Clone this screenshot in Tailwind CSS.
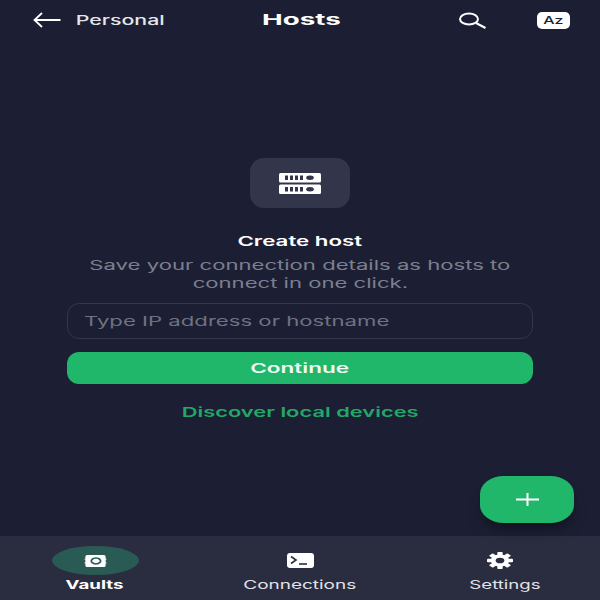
<!DOCTYPE html>
<html lang="en">
  <head>
    <meta charset="UTF-8" />
    <title>Hosts</title>
    <script src="https://cdn.jsdelivr.net/npm/@tailwindcss/browser@4"></script>
  </head>
  <body class="bg-[#1c1f33] font-['Inter',sans-serif]">
    <div class="relative flex h-[600px] w-[600px] flex-col overflow-hidden">
      <!-- header -->
      <header class="flex h-[40px] items-center text-white">
        <svg class="ml-[33px] h-[16px] w-[28px]" viewBox="0 0 28 16" fill="none" stroke="#fff" stroke-width="1.8">
          <path d="M27.5 8H2M9 1 1.500 8 9 15" />
        </svg>
        <span class="mt-[2px] ml-[15px] w-[88px] text-center text-[13px] font-medium text-[#e6e7ea]"><span class="inline-block scale-x-[1.64]">Personal</span></span>
        <span class="mt-[1px] ml-[98px] w-[78px] text-center text-[15px] font-bold"><span class="inline-block scale-x-[1.85]">Hosts</span></span>
        <svg class="ml-[118px] h-[17px] w-[29px]" viewBox="0 0 29 17" fill="none" stroke="#fff" stroke-width="2">
          <ellipse cx="11" cy="7" rx="9" ry="5.600" />
          <path d="M18 11 27.500 16" />
        </svg>
        <span class="ml-[50px] flex h-[17px] w-[33px] items-center justify-center rounded-[5px] bg-white text-[10px] font-medium text-[#1c1f33]"><span class="inline-block scale-x-[1.6]">Az</span></span>
      </header>

      <!-- empty state -->
      <main class="flex flex-1 flex-col items-center pt-[118px]">
        <div class="flex h-[50px] w-[100px] items-center justify-center rounded-[14px] bg-[#33364a]">
          <svg class="h-[21px] w-[42px]" viewBox="0 0 42 21">
            <rect width="42" height="9.500" rx="1.500" fill="#fff" />
            <rect y="11.500" width="42" height="9.500" rx="1.500" fill="#fff" />
            <g fill="#33364a">
              <rect x="6" y="2.500" width="3" height="4.500" /><rect x="11" y="2.500" width="3" height="4.500" /><rect x="16" y="2.500" width="3" height="4.500" /><rect x="21" y="2.500" width="3" height="4.500" />
              <ellipse cx="31" cy="4.750" rx="3.800" ry="2.200" />
              <rect x="6" y="14" width="3" height="4.500" /><rect x="11" y="14" width="3" height="4.500" /><rect x="16" y="14" width="3" height="4.500" /><rect x="21" y="14" width="3" height="4.500" />
              <ellipse cx="31" cy="16.250" rx="3.800" ry="2.200" />
            </g>
          </svg>
        </div>
        <h1 class="mt-[24px] text-[13.5px] leading-[18px] font-semibold text-white"><span class="inline-block scale-x-[1.65] whitespace-nowrap">Create host</span></h1>
        <p class="mt-[6px] text-center text-[13px] leading-[18px] text-[#7c7f8f]">
          <span class="inline-block scale-x-[1.7] whitespace-nowrap">Save your connection details as hosts to</span><br />
          <span class="inline-block scale-x-[1.7] whitespace-nowrap">connect in one click.</span>
        </p>
        <div class="mt-[11px] flex h-[36px] w-[466px] items-center rounded-[12px] border border-[#34374a] pl-[16px] text-[13.5px] text-[#6f7282]">
          <span class="inline-block origin-left scale-x-[1.64] whitespace-nowrap">Type IP address or hostname</span>
        </div>
        <button class="mt-[13px] flex h-[32px] w-[466px] items-center justify-center rounded-[12px] bg-[#21b76a] text-[13.5px] font-semibold text-[#eefaf3]">
          <span class="inline-block scale-x-[1.67]">Continue</span>
        </button>
        <a class="mt-[19px] text-[13.5px] leading-[18px] font-semibold text-[#22a866]"><span class="inline-block scale-x-[1.62] whitespace-nowrap">Discover local devices</span></a>
      </main>

      <!-- add button -->
      <button class="absolute top-[476px] left-[480px] flex h-[47px] w-[94px] items-center justify-center rounded-[24px/18px] bg-[#21b76a] shadow-lg shadow-black/30">
        <svg class="h-[13px] w-[23px]" viewBox="0 0 23 13" stroke="#fff" stroke-width="2"><path d="M0 6.500H23M11.500 0V13" /></svg>
      </button>

      <!-- bottom nav -->
      <nav class="grid h-[64px] grid-cols-[200px_200px_200px] bg-[#2a2d40] text-[12px] text-[#e2e3e8]">
        <div class="flex flex-col items-center">
          <span class="mt-[10px] ml-[-9px] flex h-[29px] w-[87px] items-center justify-center rounded-[50%] bg-[#2a5a54]">
            <svg class="h-[12px] w-[25px]" viewBox="0 0 24 13">
              <path fill="#fff" fill-rule="evenodd" d="M3 0H21a2 2 0 0 1 2 2V4H24V5H23V8H24V9H23V11a2 2 0 0 1-2 2H3a2 2 0 0 1-2-2V9H0V8H1V5H0V4H1V2a2 2 0 0 1 2-2ZM12.500 2.500a6 4 0 1 0 .01 0ZM12.500 4.100a4 2.400 0 1 1-.01 0Z" />
            </svg>
          </span>
          <span class="mt-[1px] ml-[-10px] font-bold text-white"><span class="inline-block scale-x-[1.56]">Vaults</span></span>
        </div>
        <div class="flex flex-col items-center">
          <svg class="mt-[17px] h-[15px] w-[27px]" viewBox="0 0 27 15">
            <rect width="27" height="15" rx="3" fill="#fff" />
            <path d="M4 3.500 9 7 4 10.500" fill="none" stroke="#2a2d40" stroke-width="1.600" />
            <path d="M12 11H20" stroke="#2a2d40" stroke-width="1.600" />
          </svg>
          <span class="mt-[8px]"><span class="inline-block scale-x-[1.58]">Connections</span></span>
        </div>
        <div class="flex flex-col items-center">
          <svg class="mt-[16px] ml-[-1px] h-[17px] w-[26px]" viewBox="0 0 24 24" preserveAspectRatio="none">
            <circle cx="12" cy="12" r="8.500" fill="#fff" />
            <g fill="#fff">
              <rect x="9.500" y="0" width="5" height="24" rx="1" />
              <rect x="9.500" y="0" width="5" height="24" rx="1" transform="rotate(45 12 12)" />
              <rect x="9.500" y="0" width="5" height="24" rx="1" transform="rotate(90 12 12)" />
              <rect x="9.500" y="0" width="5" height="24" rx="1" transform="rotate(135 12 12)" />
            </g>
            <circle cx="12" cy="12" r="4" fill="#2a2d40" />
          </svg>
          <span class="mt-[7px] ml-[9px]"><span class="inline-block scale-x-[1.55]">Settings</span></span>
        </div>
      </nav>
    </div>
  </body>
</html>
